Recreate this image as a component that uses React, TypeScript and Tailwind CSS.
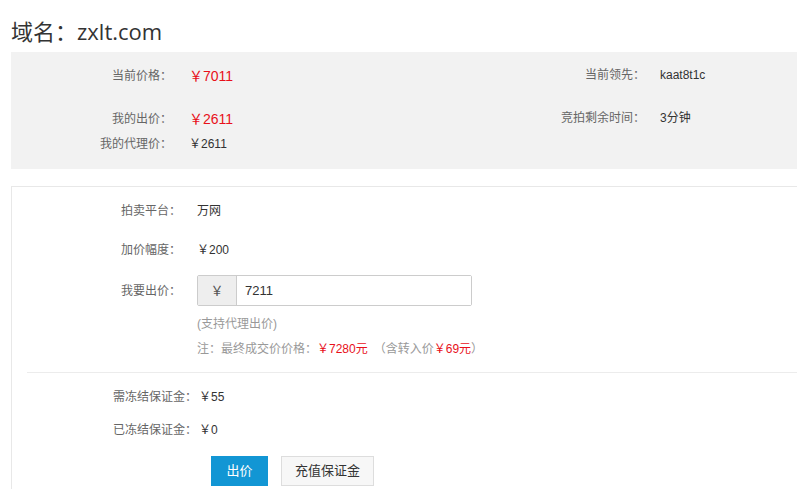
export default function App() {
  const font = { fontFamily: '"Liberation Sans", "Noto Sans CJK SC", sans-serif' };

  return (
    <div style={font} className="min-h-[489px] bg-white pl-[11px] text-[12px] text-[#333]">
      {/* Title */}
      <h1 className="pt-[15px] font-['Open_Sans','Noto_Sans_CJK_SC',sans-serif] text-[22px] leading-[32px] font-normal text-[#333]">
        域名：zxlt.com
      </h1>

      {/* Auction summary */}
      <div className="mt-[5px] h-[117px] bg-[#f2f2f2] pt-[12px]">
        <div className="flex h-6 items-center">
          <div className="flex w-[393px] items-center">
            <span className="w-[161px] text-right text-[#666]">当前价格：</span>
            <span className="pl-[17px] text-[14px] text-[#e8101a]">￥7011</span>
          </div>
          <div className="flex items-center -mt-[2px]">
            <span className="w-[241px] text-right text-[#666]">当前领先：</span>
            <span className="pl-[15px]">kaat8t1c</span>
          </div>
        </div>
        <div className="mt-[19px] flex h-6 items-center">
          <div className="flex w-[393px] items-center">
            <span className="w-[161px] text-right text-[#666]">我的出价：</span>
            <span className="pl-[17px] text-[14px] text-[#e8101a]">￥2611</span>
          </div>
          <div className="flex items-center -mt-[2px]">
            <span className="w-[241px] text-right text-[#666]">竞拍剩余时间：</span>
            <span className="pl-[15px]">3分钟</span>
          </div>
        </div>
        <div className="mt-[1px] flex h-6 items-center">
          <span className="w-[161px] text-right text-[#666]">我的代理价：</span>
          <span className="pl-[17px]">￥2611</span>
        </div>
      </div>

      {/* Bid form */}
      <div className="mt-[17px] border-t border-l border-[#e8e8e8] pt-[12px] pb-6">
        <div className="flex h-6 items-center">
          <span className="w-[169px] text-right text-[#666]">拍卖平台：</span>
          <span className="pl-[16px]">万网</span>
        </div>
        <div className="mt-[15px] flex h-6 items-center">
          <span className="w-[169px] text-right text-[#666]">加价幅度：</span>
          <span className="pl-[16px]">￥200</span>
        </div>
        <div className="mt-[13px] flex items-center">
          <span className="w-[169px] text-right text-[#666]">我要出价：</span>
          <div className="ml-[16px] flex h-[31px] w-[275px] rounded-[2px] border border-[#ccc]">
            <span className="flex w-[39px] items-center justify-center border-r border-[#ccc] bg-[#eee] text-[13px] text-[#555]">
              ￥
            </span>
            <input
              defaultValue="7211"
              className="min-w-0 flex-1 bg-white px-[8px] text-[13px] text-[#333] outline-none"
            />
          </div>
        </div>
        <div className="mt-[6px] flex h-6 items-center pl-[185px] text-[#999]">(支持代理出价)</div>
        <div className="mt-[1px] flex h-6 items-center pl-[185px] text-[#999]">
          注：最终成交价价格：<span className="text-[#e8101a]">￥7280元</span>
          <span className="ml-[6px]">（含转入价</span>
          <span className="text-[#e8101a]">￥69元</span>）
        </div>

        <div className="mt-[11px] ml-[15px] h-px bg-[#ececec]" />

        <div className="mt-[12px] flex h-6 items-center">
          <span className="w-[185px] text-right text-[#666]">需冻结保证金：</span>
          <span className="pl-[2px]">￥55</span>
        </div>
        <div className="mt-[9px] flex h-6 items-center">
          <span className="w-[185px] text-right text-[#666]">已冻结保证金：</span>
          <span className="pl-[2px]">￥0</span>
        </div>
        <div className="mt-[14px] ml-[199px] flex gap-[13px]">
          <button className="h-[30px] w-[57px] bg-[#1296d4] text-[13px] text-white">出价</button>
          <button className="h-[30px] w-[93px] border border-[#ddd] bg-[#f7f7f7] text-[13px] text-[#333]">
            充值保证金
          </button>
        </div>
      </div>
    </div>
  );
}
